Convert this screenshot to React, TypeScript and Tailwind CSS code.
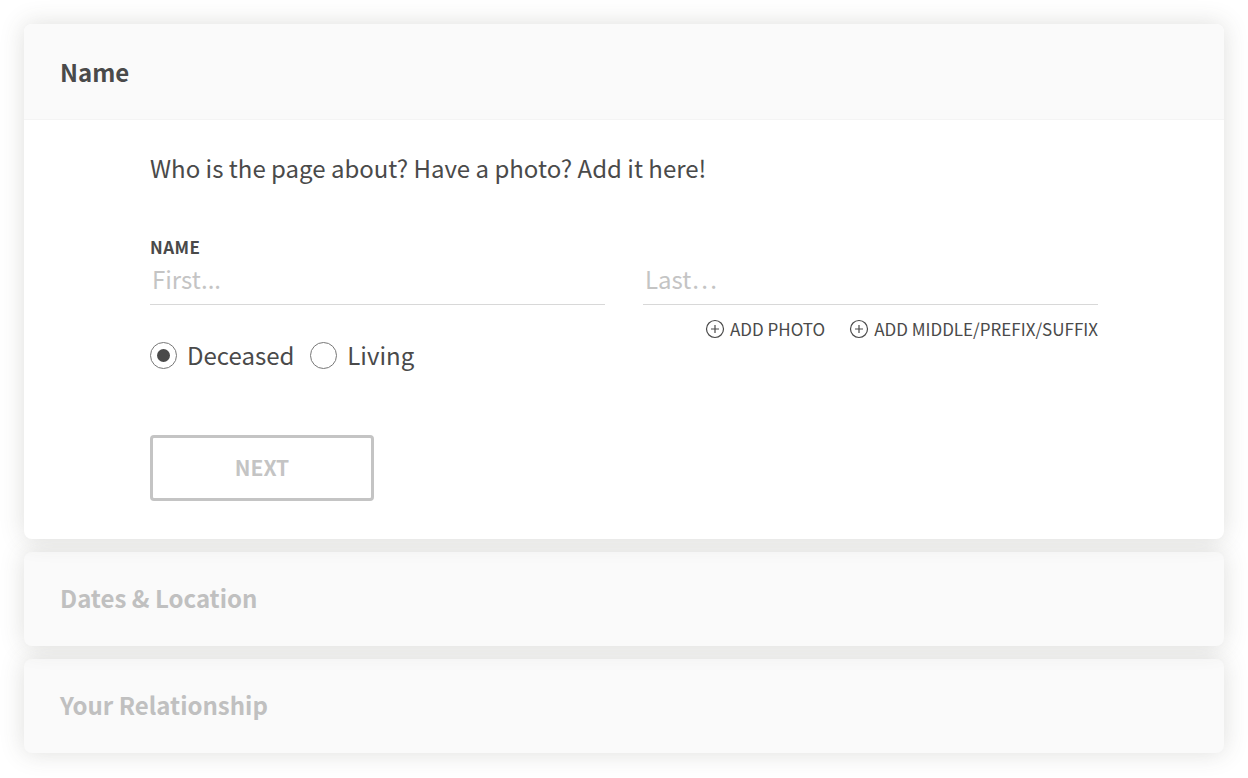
import { useState } from 'react'

interface AddLink {
  label: string
  href: string
}

const addLinks: AddLink[] = [
  { label: 'ADD PHOTO', href: '#photo' },
  { label: 'ADD MIDDLE/PREFIX/SUFFIX', href: '#full-name' }
]

const statuses = ['Deceased', 'Living']

// each card's shadow falls on the one below it
const closedSections = [
  { title: 'Dates & Location', layer: 'z-10' },
  { title: 'Your Relationship', layer: 'z-0' }
]

const cardClass = 'relative rounded-lg shadow-[0_0_24px_rgba(70,70,60,0.18)]'
const inputClass =
  'block h-[46px] w-full border-b border-[#d8d8d8] bg-transparent px-[2px] pb-[6px] text-2xl outline-none placeholder:text-[#c4c4c4]'

function PlusCircle() {
  return (
    <svg className="h-5 w-5" viewBox="0 0 20 20" fill="none" stroke="currentColor" aria-hidden="true">
      <circle cx="10" cy="10" r="8.5" strokeWidth="1.2" />
      <path d="M10 6v8M6 10h8" strokeWidth="1.2" />
    </svg>
  )
}

export default function App() {
  const [status, setStatus] = useState('Deceased')
  const [first, setFirst] = useState('')
  const [last, setLast] = useState('')

  return (
    <main className="flex min-h-screen flex-col gap-[13px] bg-white p-6 font-['Noto_Sans_CJK_SC','Source_Sans_Pro',sans-serif] text-[#4a4a4a]">
      <section className={`${cardClass} z-20 bg-white`}>
        <header className="rounded-t-lg border-b border-[#f4f4f4] bg-[#fafafa] px-9 pt-[30px] pb-[29px]">
          <h2 className="text-2xl leading-9 font-bold">Name</h2>
        </header>

        <form className="px-[126px] pt-[30px] pb-[38px]" onSubmit={(e) => e.preventDefault()}>
          <p className="text-2xl leading-9">Who is the page about? Have a photo? Add it here!</p>

          <div className="mt-[49px] grid grid-cols-2 items-end gap-x-[38px]">
            <div>
              <label htmlFor="first" className="block text-[17px] leading-6 font-bold tracking-wide">
                NAME
              </label>
              <input
                id="first"
                className={inputClass}
                placeholder="First..."
                value={first}
                onChange={(e) => setFirst(e.target.value)}
              />
            </div>
            <input
              aria-label="Last name"
              className={inputClass}
              placeholder="Last…"
              value={last}
              onChange={(e) => setLast(e.target.value)}
            />
          </div>

          <div className="flex items-start justify-between">
            <div className="flex gap-4 pt-8">
              {statuses.map((name) => (
                <label key={name} className="flex items-center gap-[10px] text-2xl leading-9">
                  <input
                    type="radio"
                    name="status"
                    className="grid h-[27px] w-[27px] appearance-none place-content-center rounded-full border border-[#777777] checked:before:h-[13px] checked:before:w-[13px] checked:before:rounded-full checked:before:bg-[#4a4a4a] checked:before:content-['']"
                    checked={status === name}
                    onChange={() => setStatus(name)}
                  />
                  {name}
                </label>
              ))}
            </div>
            <div className="flex gap-6 pt-3">
              {addLinks.map((link) => (
                <a key={link.label} href={link.href} className="flex items-center gap-[5px] text-[17px] leading-6">
                  <PlusCircle />
                  {link.label}
                </a>
              ))}
            </div>
          </div>

          <button
            type="submit"
            className="mt-[62px] block h-[66px] w-56 rounded border-3 border-[#c4c4c4] text-[21px] font-bold text-[#c4c4c4]"
          >
            NEXT
          </button>
        </form>
      </section>

      {closedSections.map((section) => (
        <section key={section.title} className={`${cardClass} ${section.layer} bg-[#fafafa] px-9 pt-7 pb-[30px]`}>
          <h2 className="text-2xl leading-9 font-bold text-[#c0c0c0]">{section.title}</h2>
        </section>
      ))}
    </main>
  )
}
